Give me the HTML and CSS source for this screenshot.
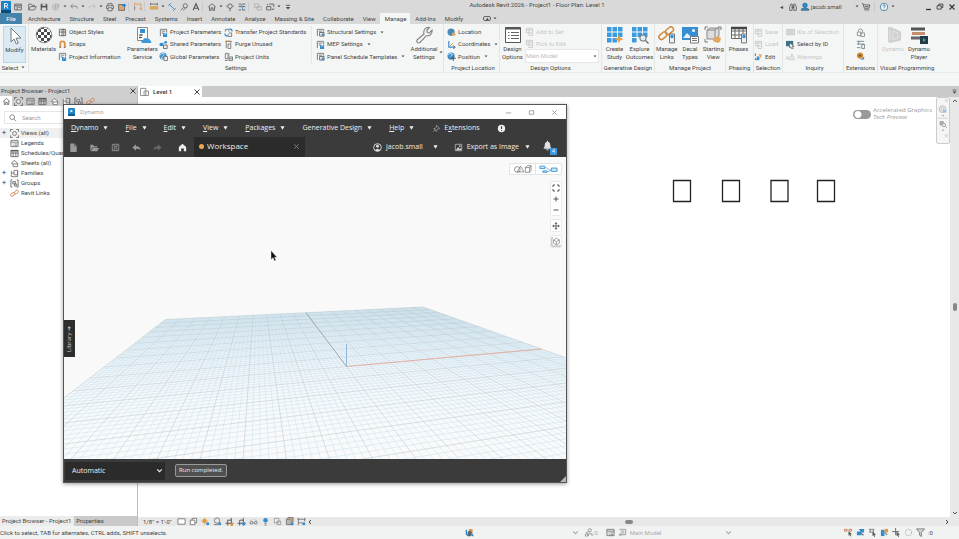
FILE: index.html
```html
<!DOCTYPE html>
<html lang="en">
<head>
<meta charset="utf-8">
<title>Autodesk Revit 2026 - Project1 - Floor Plan: Level 1</title>
<link rel="stylesheet" href="styles.css">
</head>
<body>
<svg class="sprite" aria-hidden="true">
  <symbol id="caret" viewBox="0 0 6 4"><path d="M1 .5h4L3 3z" fill="#444"/></symbol>
  <symbol id="caretw" viewBox="0 0 6 4"><path d="M.5 0h5L3 4z" fill="#f0f0f0"/></symbol>
  <symbol id="chev" viewBox="0 0 6 6"><path d="M1 2l2 2 2-2" fill="none" stroke="currentColor"/></symbol>
  <symbol id="close" viewBox="0 0 8 8"><path d="M1.500 1.500l5 5m0-5l-5 5" fill="none" stroke="currentColor"/></symbol>
  <symbol id="logo" viewBox="0 0 12 12"><rect x="1" width="10" height="12" rx="1" fill="#1b84cc"/><path d="M1 9h10v2a1 1 0 0 1-1 1H2a1 1 0 0 1-1-1z" fill="#0b4a7d"/><path d="M4.500 7.500V2.500h1.800a1.300 1.300 0 0 1 0 2.600h-1.800m2 0L7.800 7.500" fill="none" stroke="#fff"/></symbol>
  <symbol id="home" viewBox="0 0 12 12"><path d="M1.500 6L6 2l4.500 4M3 5.500V10h2V7h2v3h2V5.500" fill="none" stroke="#555"/></symbol>
  <symbol id="props" viewBox="0 0 12 12"><path d="M2 2.500h8v7H2zM2 4.500h8M5 4.500v5M6.500 6.500h2.500" fill="none" stroke="#555"/></symbol>
  <symbol id="open" viewBox="0 0 12 12"><path d="M2 9.500v-7h3l1 1.500h3v1.500M2 9.500l2-4h7l-2 4z" fill="none" stroke="#666"/></symbol>
  <symbol id="save" viewBox="0 0 12 12"><path d="M2 2h7l1 1v7H2z" fill="#555"/><path d="M4 2h4v2.500H4zM3.500 6.500h5V10h-5z" fill="#ddd"/></symbol>
  <symbol id="sync" viewBox="0 0 12 12"><circle cx="5.500" cy="6" r="3.500" fill="none" stroke="#aaa"/><path d="M3 6h5M5.500 3v6M8 2l2 2-2 2" fill="none" stroke="#aaa"/></symbol>
  <symbol id="undo" viewBox="0 0 12 12"><path d="M4.500 2.500L2 5l2.500 2.500M2.500 5H8q2 0 2 3" fill="none" stroke="#777"/></symbol>
  <symbol id="redo" viewBox="0 0 12 12"><path d="M7.500 2.500L10 5 7.500 7.500M9.500 5H4q-2 0-2 3" fill="none" stroke="#bbb"/></symbol>
  <symbol id="print" viewBox="0 0 12 12"><path d="M3.500 4.500V2h5v2.500M3.500 8H2V4.500h8V8H8.500M3.500 7h5v3.500h-5z" fill="#e8e8e8" stroke="#555"/></symbol>
  <symbol id="pdf" viewBox="0 0 12 12"><rect x="2" y="3" width="7" height="7" fill="#e2a366" stroke="#666"/><path d="M6 4h5M9 2v4" stroke="#1b87d6" stroke-width="1.500"/></symbol>
  <symbol id="meas" viewBox="0 0 12 12"><path d="M2 2.500h7.500V9M2 1v3M8 7.500L9.500 9.500 11 7.500" fill="none" stroke="#d9994a"/><path d="M2 5v5" stroke="#777"/></symbol>
  <symbol id="dim" viewBox="0 0 12 12"><path d="M2 2.500h8M2 1v3M10 1v3" stroke="#666"/><rect x="1" y="5" width="10" height="4" fill="#dda45b"/></symbol>
  <symbol id="line" viewBox="0 0 12 12"><path d="M3 3l6 6M1.500 4.500l3-3M7.500 10.500l3-3" stroke="#2b7fc0"/></symbol>
  <symbol id="tag" viewBox="0 0 12 12"><circle cx="7.500" cy="4.500" r="2.500" fill="none" stroke="#666"/><path d="M2 10l3.500-3.500M5 10l5-4" stroke="#666"/></symbol>
  <symbol id="texta" viewBox="0 0 12 12"><path d="M2.500 10L6 2l3.500 8M4 7.500h4" fill="none" stroke="#555" stroke-width="1.300"/></symbol>
  <symbol id="diam" viewBox="0 0 12 12"><circle cx="6" cy="5" r="2.700" fill="none" stroke="#555"/><path d="M6 7.500V11M1.500 5h1M9.500 5h1" stroke="#555"/></symbol>
  <symbol id="thin" viewBox="0 0 12 12"><path d="M2 2.500h3M2 5.500h3M2 9.500h3M6 2.500h4M6 5.500h4M6 9.500h4" stroke="#555"/><path d="M5 3l2 6" stroke="#1b87d6"/></symbol>
  <symbol id="winx" viewBox="0 0 12 12"><path d="M2 2.500h5v4H2zM5 5.500h5v4H5z" fill="#ddd" stroke="#aaa"/></symbol>
  <symbol id="wins" viewBox="0 0 12 12"><path d="M5 2.500h5.500v3.500M2 5.500h5v4H2zM3 4V2.500M8 9h2V7.500" fill="none" stroke="#555"/></symbol>
  <symbol id="more" viewBox="0 0 12 12"><path d="M3.500 4h5" stroke="#444"/><path d="M3.500 6h5L6 9z" fill="#444"/></symbol>
  <symbol id="bino" viewBox="0 0 12 12"><path d="M2 10V6l1.500-3.500H5V10zM7 10V2.500h1.500L10 6v4zM5 5h2v2H5z" fill="#e0e0e0" stroke="#555"/></symbol>
  <symbol id="user" viewBox="0 0 12 12"><rect x="3.500" y="1.500" width="5" height="5" rx="2" fill="#2394dc" stroke="#1b6296"/><path d="M1.500 10V8.500L4 7.500h4l2.500 1V10z" fill="#2394dc" stroke="#333" stroke-width=".6"/></symbol>
  <symbol id="cart" viewBox="0 0 12 12"><path d="M1 2h1.500L4 7.500h5.500l1-4H3M4 9.500h6" fill="none" stroke="#555"/><path d="M5 5.500h4" stroke="#555"/></symbol>
  <symbol id="help" viewBox="0 0 12 12"><circle cx="6" cy="6" r="4.500" fill="#f3f8fb" stroke="#41799d"/><path d="M4.700 5q0-1.500 1.400-1.500T7.400 5Q7.400 6 6 6.300V7M6 8v1" fill="none" stroke="#32729b"/></symbol>
  <symbol id="min" viewBox="0 0 12 12"><path d="M4 8.500h5" stroke="#333" stroke-width="1.300"/></symbol>
  <symbol id="rest" viewBox="0 0 12 12"><path d="M4.500 4.500v-2h5v4h-2M2.500 4.500h5v4h-5z" fill="none" stroke="#333"/></symbol>
  <symbol id="xx" viewBox="0 0 12 12"><path d="M3 3l6 6m0-6L3 9" stroke="#333" stroke-width="1.300"/></symbol>

  <symbol id="arrow" viewBox="0 0 18 18"><path d="M5 1l10 10-5 .3 2.300 4.700-2 1-2.300-5L5 15z" fill="#fff" stroke="#777"/></symbol>
  <symbol id="materials" viewBox="0 0 18 18"><defs><pattern id="chk" width="6" height="6" patternUnits="userSpaceOnUse"><path d="M0 0h3v3H0zM3 3h3v3H3z" fill="#4b4b4b"/></pattern></defs><circle cx="9" cy="9" r="7.800" fill="#fff"/><circle cx="9" cy="9" r="7.800" fill="url(#chk)" stroke="#666" stroke-width=".7"/></symbol>
  <symbol id="pservice" viewBox="0 0 18 18"><path d="M3.500 1.500h10v13h-10z" fill="#fff" stroke="#888"/><path d="M6 3h5v4H6z" fill="#2c8fd8"/><path d="M5 9h4M5 11.500h3M7 8v2M6 10.500v2" stroke="#555"/><path d="M8 17q-2-3 1-3 1-3 4-1.500 3-.5 3 2 2 .5 1 2.500z" fill="#3d97d8"/></symbol>
  <symbol id="wrench" viewBox="0 0 18 18"><path d="M2 14L9 8Q8 4 11 2q2-1 3.500-.5L11.800 4.500l.5 2 2 .4L17 4q.4 3-1.600 4.700-2 1.500-4 .9L5 16.500q-2 1-3-.5-.5-1 0-2z" fill="#f7f7f7" stroke="#888" stroke-width="1.200"/></symbol>
  <symbol id="dopt" viewBox="0 0 18 18"><path d="M1.500 1.500h15v15h-15z" fill="#fff" stroke="#555"/><path d="M1.500 2.500h15" stroke="#555" stroke-width="2"/><path d="M4 6.500h1.500M4 9.500h1.500M4 12.500h1.500M7 6.500h8M7 9.500h8M7 12.500h8" stroke="#666"/></symbol>
  <symbol id="study" viewBox="0 0 18 18"><path d="M1 1h4.500v4.500H1zM6.500 1H11v4.500H6.500zM12 1h4.500v4.500H12zM1 6.500h4.500V11H1zM6.500 6.500H11V11H6.500zM12 6.500h4.500V11H12zM1 12h4.500v4.500H1zM6.500 12H11v4.500H6.500z" fill="#389be0"/><path d="M13 8.500l1.200 3 3.300 1.500-3.300 1.500-1.200 3-1.200-3L8.500 13l3.300-1.500z" fill="#e6a254"/></symbol>
  <symbol id="explore" viewBox="0 0 18 18"><path d="M1 1h4.500v4.500H1zM6.500 1H11v4.500H6.500zM12 1h4.500v4.500H12zM1 6.500h4.500V11H1zM6.500 6.500H11V11H6.500zM12 6.500h4.500V11H12zM1 12h4.500v4.500H1z" fill="#389be0"/><circle cx="12" cy="12" r="3.200" fill="#dcedf8" stroke="#666"/><path d="M14.500 14.500l3 3" stroke="#666" stroke-width="1.300"/></symbol>
  <symbol id="links" viewBox="0 0 18 18"><g fill="none" stroke="#d08a3c" stroke-width="1.500"><rect x="0" y="7" width="9" height="5" rx="2.500" transform="rotate(-40 5 9)"/><rect x="7" y="2.500" width="9" height="5" rx="2.500" transform="rotate(-40 11 5)"/></g><path d="M11.500 8h5v9h-5z" fill="#eee" stroke="#777"/><path d="M12.500 9h3v3h-3z" fill="#2c8fd8"/></symbol>
  <symbol id="decal" viewBox="0 0 18 18"><path d="M1 1h16v13H1z" fill="#368fd3"/><circle cx="12.500" cy="4.500" r="1.500" fill="#fff"/><path d="M2 12l4-5 5 5z" fill="#e5f2fb"/><path d="M9.500 10.500h8v6.500h-8z" fill="#fff" stroke="#777"/><path d="M11 12.500h5M11 14.500h5" stroke="#777"/></symbol>
  <symbol id="startv" viewBox="0 0 18 18"><path d="M3 4h8v9H3zM3 4l3-2h9v8l-3 3M11 4l3-2" fill="#ddd" stroke="#888"/><path d="M1 4V1h3M14 1h3v3M1 13v3h3" fill="none" stroke="#777"/><path d="M9 12q4-3 8 0l-1 4q-3 2-7-1z" fill="#e5a75b"/></symbol>
  <symbol id="phases" viewBox="0 0 18 18"><path d="M1.500 1.500h15v11h-15zM1.500 5h15M1.500 9h15M5 2v10.500M9 2v10.500M13 2v8" fill="#fff" stroke="#666"/><path d="M1 2h16" stroke="#444" stroke-width="2.500"/><path d="M11.500 8h5v9h-5z" fill="#eee" stroke="#777"/><path d="M12.500 9h3v3h-3z" fill="#2c8fd8"/></symbol>
  <symbol id="dyn" viewBox="0 0 18 18"><path d="M4 1h3l9 4q1 .5 1 2v6q0 2-2 2l-9 2q-2 0-2-2z" fill="#cfcfcf"/><path d="M6 4v10M9 5v9l5-2V7z" stroke="#e6e6e6" fill="none"/></symbol>
  <symbol id="dynp" viewBox="0 0 18 18"><path d="M1 3h14" stroke="#555" stroke-width="3"/><path d="M2 7.500h13" stroke="#c78d6c" stroke-width="3"/><path d="M1 12h10" stroke="#666" stroke-width="3"/><path d="M10 10h8v8h-8z" fill="#1f3b4b"/><path d="M13 12l3 2-3 2z" fill="#5ca765"/></symbol>

  <symbol id="s-grid" viewBox="0 0 10 10"><path d="M1.500 1.500h5v7h-5zM1.500 4.500h7v-3h-4v7h4v-4" fill="#fff" stroke="#666"/></symbol>
  <symbol id="s-snap" viewBox="0 0 10 10"><path d="M2.500 9V4q0-2.500 2.500-2.500T7.500 4v5" fill="none" stroke="#d99345" stroke-width="2"/><path d="M1.500 8h2M6.500 8h2" stroke="#777"/></symbol>
  <symbol id="s-doc" viewBox="0 0 10 10"><path d="M1.500 9V1.500h7V5M3 3.500h4M3 5.500h2" fill="none" stroke="#777"/><path d="M4.500 5.500h4.500V10H4.500z" fill="#348ccd"/><path d="M6 6.500h2" stroke="#fff"/></symbol>
  <symbol id="s-share" viewBox="0 0 10 10"><circle cx="2.500" cy="5" r="2" fill="#348ccd"/><circle cx="7.500" cy="2.500" r="1.500" fill="#348ccd"/><path d="M2 5l5-2.500M2.500 5L6 8" stroke="#348ccd"/><path d="M5 5.500h4V9.500H5z" fill="#eee" stroke="#666"/></symbol>
  <symbol id="s-globe" viewBox="0 0 10 10"><circle cx="4.500" cy="4.500" r="4" fill="#3c8fc8"/><path d="M1 4q2-3 4-2.500T4 5t1 3" fill="none" stroke="#d9e8f1"/><path d="M5.500 5h4v4.500h-4z" fill="#eee" stroke="#777"/></symbol>
  <symbol id="s-loc" viewBox="0 0 10 10"><circle cx="4.500" cy="4.500" r="4" fill="#3c8fc8"/><path d="M1.500 3q2-2 4-1T4 5t1 3" fill="none" stroke="#777"/><circle cx="7.500" cy="7" r="2" fill="#e5a75b"/></symbol>
  <symbol id="s-pos" viewBox="0 0 10 10"><circle cx="4.500" cy="4.500" r="4" fill="#3c8fc8"/><path d="M1.500 3q2-2 4-1T4 5" fill="none" stroke="#d9e8f1"/><path d="M7 4v6M4 7h6" stroke="#555"/></symbol>
  <symbol id="s-coord" viewBox="0 0 10 10"><path d="M2 1v7h7" fill="none" stroke="#348ccd" stroke-width="1.300"/><path d="M2 8l5-5" stroke="#d98e44"/><path d="M7 6l2 2-2 2" fill="none" stroke="#555"/></symbol>
  <symbol id="s-trans" viewBox="0 0 10 10"><path d="M1.500 4V1.500h4V4M5.500 5.500h3v4h-4v-3" fill="#eee" stroke="#777"/><path d="M6 1q3 0 3 3M1 6q0 3 3 3" fill="none" stroke="#348ccd" stroke-width="1.300"/></symbol>
  <symbol id="s-purge" viewBox="0 0 10 10"><path d="M1.500 1.500h7M2.500 2v7M4.500 4.500h3v5h-3zM7.500 1v3" fill="none" stroke="#777"/><path d="M2 1.500h4" stroke="#c8824a" stroke-width="1.500"/></symbol>
  <symbol id="s-units" viewBox="0 0 10 10"><path d="M1.500 1.500h3v6h-3zM5.500 4V1.500M1 9.500h3M5.500 5.500h4v4h-4zM5.500 7.500h4" fill="none" stroke="#777"/></symbol>
  <symbol id="s-set" viewBox="0 0 10 10"><path d="M1.500 9V1.500h7V4M3 3.500h4" fill="none" stroke="#777"/><path d="M4 5h5v4H4z" fill="#eee" stroke="#666"/><circle cx="7.500" cy="7.500" r="1.300" fill="#348ccd"/></symbol>
  <symbol id="s-dis" viewBox="0 0 10 10"><path d="M1.500 1.500h7v5h-7zM1.500 3.500h7M4.500 1.500v8h4v-3" fill="none" stroke="#c9c9c9"/></symbol>
  <symbol id="s-set2" viewBox="0 0 10 10"><path d="M1.500 1.500h7v6h-5M3 3.500h4M3 5.500h4M1 7.500h3M2.500 6v3" fill="none" stroke="#999"/></symbol>
  <symbol id="s-warn" viewBox="0 0 10 10"><path d="M3.500 8.500L6.500 2l3 6.500zM6.500 4v3M.5 8.500v-3h2v3" fill="none" stroke="#c9c9c9"/></symbol>
  <symbol id="s-ids" viewBox="0 0 10 10"><path d="M.5 1.500h9v6h-9z" fill="#e0e0e0" stroke="#c4c4c4"/><path d="M2 3.500h6M2 5.500h6" stroke="#c4c4c4"/></symbol>
  <symbol id="s-edit" viewBox="0 0 10 10"><path d="M1.500 1.500v3M1.500 6.500v2h3" stroke="#666" fill="none"/><path d="M3 5h3v4H3z" fill="#348ccd"/><path d="M5 2l4 1-2 4z" fill="#e5a75b"/></symbol>
  <symbol id="s-sel" viewBox="0 0 10 10"><path d="M0 1h8v6H0z" fill="#3f7188"/><path d="M4 3l5 4H7l1 2.500-1.500.5-1-2.500L4 8.500z" fill="#fff" stroke="#444" stroke-width=".7"/></symbol>
  <symbol id="s-ext1" viewBox="0 0 10 10"><path d="M1.500 4.500h4v4h-4zM5.500 5.500h4v4h-4zM2.500 4q0-3 2.500-3t2.500 4" fill="none" stroke="#8c8c8c"/></symbol>
  <symbol id="s-ext2" viewBox="0 0 10 10"><path d="M1 1.500h8M1 4.500h8M3 1v4M6.500 5h3v4.500h-3zM1 8.500h4" fill="none" stroke="#6f8791"/></symbol>
  <symbol id="s-ext3" viewBox="0 0 10 10"><circle cx="4.500" cy="4" r="3.500" fill="#d98e2e"/><path d="M3 3h3v2H3z" fill="#555"/><path d="M5 9l4-4v3z" fill="#348ccd"/></symbol>

  <symbol id="t-view" viewBox="0 0 10 10"><path d="M.5 3V.5H3M7 .5h2.500V3M9.500 7v2.500H7M3 9.500H.5V7" fill="none" stroke="#666"/><circle cx="5" cy="5" r="2.200" fill="#eee" stroke="#777"/></symbol>
  <symbol id="t-leg" viewBox="0 0 10 10"><path d="M1 1.500h8v7H1zM1 3.500h8M3 5.500h1M5 5.500h3M3 7.500h1M5 7.500h3" fill="none" stroke="#777"/></symbol>
  <symbol id="t-sch" viewBox="0 0 10 10"><path d="M1 1.500h8v7H1zM1 4.500h8M3.500 3v5.500M6.500 3v5.500" fill="none" stroke="#666"/><path d="M1 2h8" stroke="#555" stroke-width="1.500"/></symbol>
  <symbol id="t-sheet" viewBox="0 0 10 10"><path d="M1.500 5l3-3.500 4 3v4h-5v-3zM3.500 5.500h5" fill="#fff" stroke="#777"/></symbol>
  <symbol id="t-fam" viewBox="0 0 10 10"><path d="M1.500 2v6.500H8.500v-7M4.500 1.500h4v5h-4zM1.500 4.500h3" fill="#fff" stroke="#777"/></symbol>
  <symbol id="t-grp" viewBox="0 0 10 10"><path d="M2.500 1H1v8h1.500M7.500 1H9v8H7.500" fill="none" stroke="#666"/><path d="M3 3l3-.5v3H3zM5 5.500h2.500V8H5z" fill="#ddd" stroke="#777"/></symbol>
  <symbol id="t-link" viewBox="0 0 10 10"><g fill="none" stroke="#d0875a"><rect x="0.500" y="4.500" width="5" height="3" rx="1.500" transform="rotate(-35 3 6)"/><rect x="4.500" y="2" width="5" height="3" rx="1.500" transform="rotate(-35 7 3.500)"/></g></symbol>

  <symbol id="v-rect" viewBox="0 0 10 10"><path d="M1 2h8v6H1z" fill="#fff" stroke="#777"/></symbol>
  <symbol id="v-cube" viewBox="0 0 10 10"><path d="M1.500 3.500h5v5h-5zM3.500 3.500v-2h5v5h-2" fill="#fff" stroke="#777"/></symbol>
  <symbol id="v-sheet" viewBox="0 0 10 10"><path d="M.5 1.500h6v8h-6zM4.500 4.500h5v5h-5z" fill="#fff" stroke="#888"/></symbol>
  <symbol id="v-sun" viewBox="0 0 10 10"><circle cx="4" cy="4.500" r="2.500" fill="#e29b45"/><path d="M4 .5v8M0 4.500h8" stroke="#e29b45" stroke-width=".7"/><circle cx="7.500" cy="7.500" r="1.700" fill="#348ccd"/></symbol>
  <symbol id="v-shadow" viewBox="0 0 10 10"><circle cx="4.500" cy="4" r="3" fill="#e9e9e9" stroke="#777"/><path d="M1 8.500h5" stroke="#777"/><circle cx="7.500" cy="7.500" r="1.700" fill="#348ccd"/></symbol>
  <symbol id="v-crop" viewBox="0 0 10 10"><path d="M.5 7h9M3 9.500V3.500h4V9.500M7 1v3" fill="none" stroke="#555"/><path d="M6 7h3v3H6z" fill="#e29b45"/></symbol>
  <symbol id="v-crop2" viewBox="0 0 10 10"><path d="M.5 7h9M3 9.500V3.500h4V9.500M7 1v3" fill="none" stroke="#555"/><circle cx="7.500" cy="7.500" r="1.900" fill="#348ccd"/></symbol>
  <symbol id="v-glass" viewBox="0 0 10 10"><path d="M1 7q0-2 2-2t1.500 2-3.500 0M5.500 7q0-2 2-2T9 7t-3.500 0M2 4l1-1M8 4L7 3" fill="none" stroke="#777"/></symbol>
  <symbol id="v-bulb" viewBox="0 0 10 10"><circle cx="5" cy="3.500" r="2.500" fill="#348ccd"/><path d="M4 7h2M4 9h2" stroke="#666"/></symbol>
  <symbol id="v-copy" viewBox="0 0 10 10"><path d="M1.500 1.500h5v5h-5zM4.500 4.500h4v4h-4z" fill="#eee" stroke="#999"/></symbol>
  <symbol id="v-gd" viewBox="0 0 10 10"><path d="M1.500 2.500h6v6h-6zM2 2l2-1.500h5v5" fill="#b5b5b5" stroke="#777"/><path d="M6 1l2 2-2 2z" fill="#e29b45"/><circle cx="8" cy="7.500" r="1.700" fill="#348ccd"/></symbol>
  <symbol id="v-dim" viewBox="0 0 10 10"><path d="M.5 2.500h9M1.500 1v8M8.500 1v4M2 6.500h4" stroke="#777"/><circle cx="7.500" cy="7.500" r="1.700" fill="#348ccd"/></symbol>
  <symbol id="v-funnel" viewBox="0 0 10 10"><path d="M.5 1h9L6 5v4.500L4 8V5z" fill="#d5d5d5" stroke="#777"/></symbol>
  <symbol id="v-lsel" viewBox="0 0 10 10"><path d="M.5 1.500h3v2h-3zM5.500 1.500h3v2h-3z" fill="none" stroke="#cb7954"/><path d="M5 3.500l4 3.500H7l1 2-1 .5-1-2L5 8.500z" fill="#555"/></symbol>
  <symbol id="v-usel" viewBox="0 0 10 10"><path d="M1 4h5v4H1zM3 1h6v4H6z" fill="#348ccd"/><path d="M5 4.500l4 3.500H7l1 2" fill="#555"/></symbol>
  <symbol id="v-psel" viewBox="0 0 10 10"><path d="M1 1.500h6M2.500 1.500v3M6 1.500v3M1 4.500h5" stroke="#777"/><path d="M5 4l4 3.500H7l1 2-1 .5-1-2L5 9z" fill="#555"/></symbol>
  <symbol id="v-fsel" viewBox="0 0 10 10"><path d="M1 2h4v7H1z" fill="#348ccd"/><path d="M5 1h4v4H5z" fill="#e29b45"/><path d="M4.500 3.500l4 4H7l1 2" fill="#555"/></symbol>
  <symbol id="v-drag" viewBox="0 0 10 10"><path d="M4 0v8M0 4h8" stroke="#666"/><path d="M5 4l4 3.500H7l1 2-1 .5-1-2L5 9z" fill="#555"/></symbol>
  <symbol id="v-ring" viewBox="0 0 10 10"><circle cx="5" cy="5" r="3.500" fill="none" stroke="#bbb" stroke-width="1.300" stroke-dasharray="1.500 1"/></symbol>
  <symbol id="v-work" viewBox="0 0 10 10"><path d="M1.500 2v5L4 9" fill="none" stroke="#348ccd" stroke-width="1.500"/><path d="M4 1h4.500v5H5z" fill="#e29b45"/><path d="M3 4l3-1 1.500 2v3L5 9.500 3 8z" fill="#58656e"/><path d="M8 6v2.500h1.500" stroke="#348ccd" fill="none" stroke-width="1.500"/></symbol>
  <symbol id="v-req" viewBox="0 0 10 10"><circle cx="6.500" cy="2.500" r="1.800" fill="#eee" stroke="#999"/><path d="M1.500 9V6.500H4V9zM5 9V6.500h4V9M3 6V4.500h3" fill="none" stroke="#999"/></symbol>

  <symbol id="d-new" viewBox="0 0 12 12"><path d="M2.500 1.500h4.500l2.500 3v6.500h-7z" fill="#9b9b9b"/><path d="M7 1.500v3h2.500" stroke="#555" fill="none" stroke-width=".7"/></symbol>
  <symbol id="d-open" viewBox="0 0 12 12"><path d="M1.500 10V3h3l1 1.500H9V6H3.500z" fill="#999"/><path d="M4 6.500h7L9 10H2z" fill="#999"/></symbol>
  <symbol id="d-save" viewBox="0 0 12 12"><path d="M2.500 2.500h7v7h-7zM4.500 2.500v2.500h3V2.500M4.500 9.500v-3h3v3" fill="none" stroke="#8f8f8f"/></symbol>
  <symbol id="d-undo" viewBox="0 0 12 12"><path d="M1.500 6L5.500 2.500v2Q10 4.500 10.500 9 9 7.300 5.500 7.500v2z" fill="#999"/></symbol>
  <symbol id="d-redo" viewBox="0 0 12 12"><path d="M10.500 6L6.500 2.500v2Q2 4.500 1.500 9 3 7.300 6.500 7.500v2z" fill="#666"/></symbol>
  <symbol id="d-home" viewBox="0 0 12 12"><path d="M2 5.500L6 2l4 3.500V10H7.500V7h-3v3H2z" fill="#ededed"/></symbol>
  <symbol id="d-user" viewBox="0 0 12 12"><circle cx="6" cy="6" r="4.200" fill="#3b3b3b" stroke="#ddd"/><circle cx="6" cy="4.700" r="1.600" fill="#ddd"/><path d="M3 9q3-3.500 6 0-3 2.500-6 0z" fill="#ddd"/></symbol>
  <symbol id="d-img" viewBox="0 0 12 12"><path d="M2.500 2.500h7v7h-7z" fill="none" stroke="#aaa"/><path d="M3 9l2.500-3.500 2 2L9 6v3z" fill="#ccc"/><circle cx="7.500" cy="4.500" r=".9" fill="#ccc"/></symbol>
  <symbol id="d-bell" viewBox="0 0 12 12"><path d="M1.500 9.500q1.500-1 1.500-4T6 2q3 .5 3 3.500t1.500 4z" fill="#e0e0e0"/><path d="M6 .8v2M4.800 10.700h2.400" stroke="#e0e0e0" stroke-width="1.200"/></symbol>
  <symbol id="d-pin" viewBox="0 0 12 12"><path d="M6 2.500l3.500 3.500-1 .5-1-.2-1.300 1.500v1.500L3 6h1.500l1.300-1.500zM4.500 7.500L2.500 9.500" fill="none" stroke="#aaa" stroke-width=".8"/></symbol>
  <symbol id="d-warn" viewBox="0 0 12 12"><circle cx="6" cy="6" r="4" fill="#efefef"/><path d="M6 3.500v3M6 7.500v1" stroke="#3b3b3b" stroke-width="1.200"/></symbol>
  <symbol id="d-geo" viewBox="0 0 20 10"><circle cx="4.500" cy="5.500" r="3" fill="none" stroke="#777" stroke-width=".8"/><path d="M4.500 8l3.500-6 3.500 6zM13 3.500h4.500V8.500H13zM13 3.500L15 1.500h4v5L17.500 8.500M17.500 3.500l1.500-2" fill="none" stroke="#777" stroke-width=".8"/></symbol>
  <symbol id="d-nodes" viewBox="0 0 20 10"><path d="M6 3.500q2.500 0 3.500 1.500t3.500 1M8.500 8L13 6.500" fill="none" stroke="#4a9bd3" stroke-width=".7"/><path d="M1 2h5v2.500H1zM4 7h4.500v1.500H4zM13 4h6v3.500h-6z" fill="#cfe6f6" stroke="#4a9bd3"/></symbol>
  <symbol id="d-fit" viewBox="0 0 10 10"><path d="M2 4V2h2M6 2h2v2M8 6v2H6M4 8H2V6" fill="none" stroke="#555"/></symbol>
  <symbol id="d-plus" viewBox="0 0 10 10"><path d="M5 2.500v5M2.500 5h5" stroke="#555"/></symbol>
  <symbol id="d-minus" viewBox="0 0 10 10"><path d="M2.500 5h5" stroke="#555"/></symbol>
  <symbol id="d-pan" viewBox="0 0 10 10"><path d="M5 2v6M2 5h6" stroke="#666"/><path d="M5 1l1.500 2h-3zM5 9l1.500-2h-3zM1 5l2-1.500v3zM9 5L7 3.500v3z" fill="#666"/></symbol>
  <symbol id="d-orbit" viewBox="0 0 12 12"><path d="M1 1v10h10M1 1h1.500M11 11V9.500" fill="none" stroke="#888" stroke-width=".8"/><path d="M6.500 1.500l3.500 2v4l-3.500 2-3.500-2v-4zM6.500 5.500v4M6.500 5.500L3 3.500M6.500 5.500l3.500-2" fill="none" stroke="#777" stroke-width=".8"/></symbol>
</svg>

<header>
  <div class="titlebar">
    <div class="quick">
      <button class="q" aria-label="Revit"><svg><use href="#logo"/></svg></button>
      <button class="q" aria-label="Home"><svg><use href="#props"/></svg></button><i class="gap"></i>
      <button class="q" aria-label="Open"><svg><use href="#open"/></svg></button>
      <button class="q" aria-label="Save"><svg><use href="#save"/></svg></button>
      <button class="q" aria-label="Synchronize"><svg><use href="#sync"/></svg></button>
      <svg class="c"><use href="#caret"/></svg>
      <button class="q" aria-label="Undo"><svg><use href="#undo"/></svg></button>
      <svg class="c"><use href="#caret"/></svg>
      <button class="q" aria-label="Redo"><svg><use href="#redo"/></svg></button>
      <svg class="c"><use href="#caret"/></svg>
      <button class="q" aria-label="Print"><svg><use href="#print"/></svg></button>
      <button class="q" aria-label="Export PDF"><svg><use href="#pdf"/></svg></button><i class="bar"></i>
      <button class="q" aria-label="Measure"><svg><use href="#meas"/></svg></button><i class="bar"></i>
      <button class="q" aria-label="Dimension"><svg><use href="#dim"/></svg></button>
      <svg class="c"><use href="#caret"/></svg>
      <button class="q" aria-label="Detail line"><svg><use href="#line"/></svg></button>
      <button class="q" aria-label="Tag"><svg><use href="#tag"/></svg></button>
      <button class="q" aria-label="Text"><svg><use href="#texta"/></svg></button><i class="bar"></i>
      <button class="q" aria-label="3D view"><svg><use href="#home"/></svg></button>
      <svg class="c"><use href="#caret"/></svg>
      <button class="q" aria-label="Section"><svg><use href="#diam"/></svg></button>
      <button class="q" aria-label="Thin lines"><svg><use href="#thin"/></svg></button><i class="bar"></i>
      <button class="q" aria-label="Close inactive"><svg><use href="#winx"/></svg></button>
      <button class="q" aria-label="Switch windows"><svg><use href="#wins"/></svg></button>
      <svg class="c"><use href="#caret"/></svg>
      <button class="q" aria-label="Customize"><svg><use href="#more"/></svg></button>
    </div>
    <h1>Autodesk Revit 2026 - Project1 - Floor Plan: Level 1</h1>
    <div class="account">
      <span class="back">◂</span>
      <button class="q" aria-label="Search"><svg><use href="#bino"/></svg></button>
      <button class="q" aria-label="Account"><svg><use href="#user"/></svg></button>
      <span class="name">jacob.small</span>
      <svg class="c"><use href="#caret"/></svg>
      <button class="q" aria-label="Store"><svg><use href="#cart"/></svg></button><i class="bar"></i>
      <button class="q" aria-label="Help"><svg><use href="#help"/></svg></button>
      <svg class="c"><use href="#caret"/></svg>
    </div>
    <div class="caption">
      <button class="q" aria-label="Minimize"><svg><use href="#min"/></svg></button>
      <button class="q" aria-label="Restore"><svg><use href="#rest"/></svg></button>
      <button class="q" aria-label="Close"><svg><use href="#xx"/></svg></button>
    </div>
  </div>
  <nav class="tabs">
    <a href="#" class="file">File</a><a href="#">Architecture</a><a href="#">Structure</a><a href="#">Steel</a><a href="#">Precast</a><a href="#">Systems</a><a href="#">Insert</a><a href="#">Annotate</a><a href="#">Analyze</a><a href="#">Massing &amp; Site</a><a href="#">Collaborate</a><a href="#">View</a><a href="#" class="on">Manage</a><a href="#">Add-Ins</a><a href="#">Modify</a>
    <button class="disp" aria-label="Ribbon display"><span>▴</span><svg class="c"><use href="#caret"/></svg></button>
  </nav>
</header>

<section class="ribbon">
  <div class="panel p-select"><div class="body"><button class="big sel"><svg><use href="#arrow"/></svg>Modify</button></div><h2>Select <svg class="c"><use href="#caret"/></svg></h2></div>
  <div class="panel p-settings"><div class="body">
    <button class="big"><svg><use href="#materials"/></svg>Materials</button>
    <div class="col"><button><svg><use href="#s-grid"/></svg>Object Styles</button><button><svg><use href="#s-snap"/></svg>Snaps</button><button><svg><use href="#s-doc"/></svg>Project Information</button></div>
    <button class="big"><svg><use href="#pservice"/></svg>Parameters Service</button>
    <div class="col"><button><svg><use href="#s-doc"/></svg>Project Parameters</button><button><svg><use href="#s-share"/></svg>Shared Parameters</button><button><svg><use href="#s-globe"/></svg>Global Parameters</button></div>
    <div class="col"><button><svg><use href="#s-trans"/></svg>Transfer Project Standards</button><button><svg><use href="#s-purge"/></svg>Purge Unused</button><button><svg><use href="#s-units"/></svg>Project Units</button></div>
    <div class="col ruled"><button><svg><use href="#s-set"/></svg>Structural Settings <svg class="c"><use href="#caret"/></svg></button><button><svg><use href="#s-doc"/></svg>MEP Settings <svg class="c"><use href="#caret"/></svg></button><button><svg><use href="#s-set"/></svg>Panel Schedule Templates <svg class="c"><use href="#caret"/></svg></button></div>
    <button class="big"><svg><use href="#wrench"/></svg>Additional Settings</button>
    <svg class="c low"><use href="#caret"/></svg>
  </div><h2>Settings</h2></div>
  <div class="panel p-loc"><div class="body"><div class="col"><button><svg><use href="#s-loc"/></svg>Location</button><button><svg><use href="#s-coord"/></svg>Coordinates <svg class="c"><use href="#caret"/></svg></button><button><svg><use href="#s-pos"/></svg>Position <svg class="c"><use href="#caret"/></svg></button></div></div><h2>Project Location</h2></div>
  <div class="panel p-opt"><div class="body"><button class="big"><svg><use href="#dopt"/></svg>Design Options</button>
    <div class="col"><button disabled><svg><use href="#s-dis"/></svg>Add to Set</button><button disabled><svg><use href="#s-dis"/></svg>Pick to Edit</button>
    <div class="pick"><select aria-label="Design option"><option>Main Model</option></select><svg class="c"><use href="#caret"/></svg></div></div></div><h2>Design Options</h2></div>
  <div class="panel p-gen"><div class="body"><button class="big"><svg><use href="#study"/></svg>Create Study</button><button class="big"><svg><use href="#explore"/></svg>Explore Outcomes</button></div><h2>Generative Design</h2></div>
  <div class="panel p-mng"><div class="body"><button class="big"><svg><use href="#links"/></svg>Manage Links</button><button class="big"><svg><use href="#decal"/></svg>Decal Types</button><button class="big"><svg><use href="#startv"/></svg>Starting View</button></div><h2>Manage Project</h2></div>
  <div class="panel p-pha"><div class="body"><button class="big"><svg><use href="#phases"/></svg>Phases</button></div><h2>Phasing</h2></div>
  <div class="panel p-sel"><div class="body"><div class="col"><button disabled><svg><use href="#s-dis"/></svg>Save</button><button disabled><svg><use href="#s-dis"/></svg>Load</button><button><svg><use href="#s-edit"/></svg>Edit</button></div></div><h2>Selection</h2></div>
  <div class="panel p-inq"><div class="body"><div class="col"><button disabled><svg><use href="#s-ids"/></svg>IDs of Selection</button><button><svg><use href="#s-sel"/></svg>Select by ID</button><button disabled><svg><use href="#s-warn"/></svg>Warnings</button></div></div><h2>Inquiry</h2></div>
  <div class="panel p-ext"><div class="body"><div class="col"><button aria-label="Extension 1"><svg><use href="#s-ext1"/></svg></button><button aria-label="Extension 2"><svg><use href="#s-ext2"/></svg></button><button aria-label="Extension 3"><svg><use href="#s-ext3"/></svg></button></div></div><h2>Extensions</h2></div>
  <div class="panel p-vis"><div class="body"><button class="big" disabled><svg><use href="#dyn"/></svg>Dynamo</button><button class="big"><svg><use href="#dynp"/></svg>Dynamo Player</button></div><h2>Visual Programming</h2></div>
</section>
<div class="optionbar"></div>

<main>
  <aside class="browser">
    <div class="bhead"><span>Project Browser - Project1</span><button aria-label="Close browser"><svg><use href="#close"/></svg></button></div>
    <div class="btools">
      <button class="on" aria-label="All"><svg><use href="#home"/></svg></button><button aria-label="Views"><svg><use href="#t-view"/></svg></button><button aria-label="Legends"><svg><use href="#t-leg"/></svg></button><button aria-label="Schedules"><svg><use href="#t-sch"/></svg></button><button aria-label="Sheets"><svg><use href="#t-sheet"/></svg></button><button aria-label="Families"><svg><use href="#t-fam"/></svg></button><button aria-label="Groups"><svg><use href="#t-grp"/></svg></button><button aria-label="Links"><svg><use href="#t-link"/></svg></button>
    </div>
    <label class="search"><svg viewBox="0 0 10 10"><circle cx="4" cy="4" r="3" fill="none" stroke="#777"/><path d="M6.500 6.500L9 9" stroke="#777"/></svg><input type="search" placeholder="Search" aria-label="Search"></label>
    <ul class="tree">
      <li class="on"><b>+</b><svg><use href="#t-view"/></svg>Views (all)</li>
      <li><b></b><svg><use href="#t-leg"/></svg>Legends</li>
      <li><b></b><svg><use href="#t-sch"/></svg>Schedules/Quantities</li>
      <li><b></b><svg><use href="#t-sheet"/></svg>Sheets (all)</li>
      <li><b>+</b><svg><use href="#t-fam"/></svg>Families</li>
      <li><b>+</b><svg><use href="#t-grp"/></svg>Groups</li>
      <li><b></b><svg><use href="#t-link"/></svg>Revit Links</li>
    </ul>
    <div class="btabs"><button class="on">Project Browser - Project1</button><button>Properties</button></div>
  </aside>
  <section class="doc">
    <div class="dtabs"><div class="dtab"><svg><use href="#v-sheet"/></svg><span>Level 1</span><button aria-label="Close Level 1"><svg><use href="#close"/></svg></button></div><svg class="menu"><use href="#more"/></svg></div>
    <div class="plan">
      <div class="sheet">
        <svg class="columns" viewBox="0 0 164 24"><path d="M1.500 1.500h17v21h-17zM50.500 1.500h17v21h-17zM99 1.500h17v21h-17zM145.500 1.500h17v21h-17z" fill="#fff" stroke="#222" stroke-width="1.300"/></svg>
        <label class="accel"><input type="checkbox"><span>Accelerated Graphics<br><em>Tech Preview</em></span></label>
        <div class="navbar"><svg viewBox="0 0 14 47"><circle cx="11" cy="3" r="1.200" fill="none" stroke="#aaa" stroke-width=".6"/><circle cx="6.500" cy="13" r="4" fill="#e4e4e4" stroke="#bbb"/><circle cx="6.500" cy="13" r="1.500" fill="#fff" stroke="#bbb"/><path d="M7 14h4v3H7z" fill="#9fc0dc"/><path d="M5.500 20h3L7 21.500zM5.500 37h3L7 38.500z" fill="#888"/><path d="M1 23.500h12" stroke="#ccc"/><path d="M3 27h5v5H3z" fill="#aaa"/><circle cx="8" cy="31.500" r="2" fill="#eee" stroke="#999"/><path d="M9.500 33l2 2" stroke="#999"/><circle cx="11" cy="44" r="1.200" fill="none" stroke="#aaa" stroke-width=".6"/></svg></div>
      </div>
      <div class="vscroll"><svg class="up"><use href="#chev"/></svg><i></i><svg><use href="#chev"/></svg></div>
    </div>
    <div class="viewbar"><span class="scale">1/8" = 1'-0"</span>
      <button aria-label="Detail level"><svg><use href="#v-rect"/></svg></button><button aria-label="Visual style"><svg><use href="#v-cube"/></svg></button><button aria-label="Sun path"><svg><use href="#v-sun"/></svg></button><button aria-label="Shadows"><svg><use href="#v-shadow"/></svg></button><button aria-label="Crop"><svg><use href="#v-crop"/></svg></button><button aria-label="Show crop"><svg><use href="#v-crop2"/></svg></button><button aria-label="Hide"><svg><use href="#v-glass"/></svg></button><button aria-label="Reveal"><svg><use href="#v-bulb"/></svg></button><button aria-label="Temporary view"><svg><use href="#v-copy"/></svg></button><button aria-label="Analytical model"><svg><use href="#v-gd"/></svg></button><button aria-label="Constraints"><svg><use href="#v-dim"/></svg></button>
      <svg class="left"><use href="#chev"/></svg>
      <div class="hscroll"><i></i></div><svg class="right"><use href="#chev"/></svg><span class="corner"></span>
    </div>
  </section>
</main>

<footer>
  <span class="hint">Click to select, TAB for alternates, CTRL adds, SHIFT unselects.</span>
  <svg><use href="#v-work"/></svg>
  <div class="sets"><svg class="dim"><use href="#chev"/></svg><svg><use href="#v-req"/></svg><span>:0</span><svg class="ml"><use href="#t-leg"/></svg><svg><use href="#s-set2"/></svg><span class="mm">Main Model</span><svg class="dim"><use href="#chev"/></svg></div>
  <div class="selects"><svg><use href="#v-lsel"/></svg><svg><use href="#v-usel"/></svg><svg><use href="#v-psel"/></svg><svg><use href="#v-fsel"/></svg><svg><use href="#v-drag"/></svg><svg><use href="#v-ring"/></svg><svg><use href="#v-funnel"/></svg><span>:0</span></div>
</footer>

<section class="dynamo" aria-label="Dynamo">
  <div class="dtitle"><svg class="ico" viewBox="0 0 8 8"><rect x="1" width="7" height="8" rx="1" fill="#1d84c6"/><path d="M1 6h7v2H1z" fill="#175a8b"/><path d="M3.500 1.500L6 3 3.500 4.500z" fill="#fff"/></svg><span>Dynamo</span>
    <button aria-label="Minimize"><svg viewBox="0 0 8 8"><path d="M1 4.500h6" stroke="#999"/></svg></button><button aria-label="Maximize"><svg viewBox="0 0 8 8"><path d="M1.500 2h5v4h-5z" fill="none" stroke="#999"/></svg></button><button aria-label="Close"><svg><use href="#close"/></svg></button></div>
  <nav class="dmenu">
    <button><span><u>D</u>ynamo</span><svg><use href="#caretw"/></svg></button><button><span><u>F</u>ile</span><svg><use href="#caretw"/></svg></button><button><span><u>E</u>dit</span><svg><use href="#caretw"/></svg></button><button><span><u>V</u>iew</span><svg><use href="#caretw"/></svg></button><button><span><u>P</u>ackages</span><svg><use href="#caretw"/></svg></button><button><span>Generative Design</span><svg><use href="#caretw"/></svg></button><button><span><u>H</u>elp</span><svg><use href="#caretw"/></svg></button>
    <button class="ext"><svg class="pin"><use href="#d-pin"/></svg><span>E<u>x</u>tensions</span></button><button class="alert" aria-label="Alerts"><svg class="pin"><use href="#d-warn"/></svg></button>
  </nav>
  <div class="dtools">
    <div class="acts"><button aria-label="New"><svg><use href="#d-new"/></svg></button><button aria-label="Open"><svg><use href="#d-open"/></svg></button><button aria-label="Save"><svg><use href="#d-save"/></svg></button><button aria-label="Undo"><svg><use href="#d-undo"/></svg></button><button aria-label="Redo"><svg><use href="#d-redo"/></svg></button></div>
    <button class="hm" aria-label="Home"><svg><use href="#d-home"/></svg></button>
    <div class="wtab"><i></i><span>Workspace</span><button aria-label="Close workspace"><svg><use href="#close"/></svg></button></div>
    <button class="usr"><svg><use href="#d-user"/></svg><span>jacob.small</span><svg class="cw"><use href="#caretw"/></svg></button>
    <button class="exp"><svg><use href="#d-img"/></svg><span>Export as Image</span><svg class="cw"><use href="#caretw"/></svg></button>
    <button class="bell" aria-label="Notifications"><svg><use href="#d-bell"/></svg><b>4</b></button>
  </div>
  <div class="dview">
    <svg id="space" viewBox="64 157 502 302" preserveAspectRatio="xMidYMid slice"><defs><linearGradient id="haze" gradientUnits="userSpaceOnUse" x1="0" y1="305" x2="0" y2="459"><stop offset="0" stop-color="#d8e9f3"/><stop offset=".25" stop-color="#ecf4f9"/><stop offset=".6" stop-color="#f6f9fb"/><stop offset="1" stop-color="#f9fafb"/></linearGradient></defs></svg>
    <div class="modes"><button aria-label="Geometry view"><svg><use href="#d-geo"/></svg></button><button aria-label="Graph view"><svg><use href="#d-nodes"/></svg></button></div>
    <div class="zooms">
      <div><button aria-label="Fit"><svg><use href="#d-fit"/></svg></button><button aria-label="Zoom in"><svg><use href="#d-plus"/></svg></button><button aria-label="Zoom out"><svg><use href="#d-minus"/></svg></button></div>
      <div><button aria-label="Pan"><svg><use href="#d-pan"/></svg></button></div>
      <div><button aria-label="Orbit"><svg><use href="#d-orbit"/></svg></button></div>
    </div>
    <button class="library">Library <span>➔</span></button>
    <svg class="pointer" viewBox="0 0 8 12"><path d="M1 .5v9l2-1.800L4.500 11l1.500-.7-1.500-3h2.500z" fill="#111" stroke="#fff" stroke-width=".4"/></svg>
  </div>
  <div class="drun"><div class="mode"><select aria-label="Run mode"><option>Automatic</option></select><svg><use href="#chev"/></svg></div><output>Run completed.</output><svg class="grip" viewBox="0 0 6 6"><path d="M6 0v6H0z" fill="#b5b5b5"/></svg></div>
</section>
<script src="grid.js"></script>
</body>
</html>
```
FILE: styles.css
```css
* { box-sizing: border-box; }
body { margin: 0; height: 100vh; display: flex; flex-direction: column; overflow: hidden; background: #fff; color: #444; font: 6px/8px Roboto, "Noto Sans", sans-serif; }
button, input, select { font: inherit; color: inherit; background: none; border: 0; padding: 0; margin: 0; }
h1, h2, ul { margin: 0; padding: 0; font: inherit; list-style: none; }
a { color: inherit; text-decoration: none; }
svg { display: block; flex: none; }
.sprite { position: absolute; width: 0; height: 0; }
.c { width: 6px; height: 3px; }

/* Title bar and tabs */
header { background: #d9d9d9; }
.titlebar { display: flex; height: 13px; align-items: center; }
.quick, .account, .caption { display: flex; align-items: center; }
.q, .q svg { width: 12px; height: 12px; }
.q svg { padding: 1px; }
.q:first-child svg { padding: 0; }
.gap { width: 2px; }
.bar { width: 4px; height: 10px; border-left: 1px solid #cacaca; }
.titlebar h1 { flex: 1; text-align: center; line-height: 10px; align-self: flex-start; }
.back { width: 7px; }
.name { width: 43px; }
.account .bar { margin-left: 2px; }
.caption { margin-left: 26px; margin-right: 1px; }
.tabs { display: flex; height: 11px; line-height: 11px; }
.tabs a { padding: 0 4px 0 5px; }
.tabs .file { width: 22px; margin-right: 1px; padding: 0; text-align: center; background: #4483aa; color: #fff; }
.tabs .on { background: #f4f6f6; }
.disp { display: flex; align-items: center; gap: 1px; margin-left: 16px; }
.disp span { width: 8px; height: 5px; border: 1px solid #666; border-radius: 2px; font-size: 5px; line-height: 3px; }

/* Ribbon */
.ribbon { display: flex; background: #f4f6f6; height: 49px; border-bottom: 1px solid #e9ebeb; }
.panel { border-right: 1px solid #e4e6e6; padding-top: 2px; display: flex; flex-direction: column; }
.body { display: flex; height: 37px; }
.panel h2 { height: 9px; line-height: 10px; display: flex; align-items: center; justify-content: center; gap: 2px; white-space: nowrap; }
.big { width: 25px; display: flex; flex-direction: column; align-items: center; line-height: 8px; }
.big svg { width: 18px; height: 18px; margin-bottom: 1px; }
.big.sel { width: 23px; margin-left: 3px; background: #dcebf3; border: 1px solid #b9d7e6; }
.col { display: flex; flex-direction: column; }
.col > * { flex: 1; display: flex; align-items: center; gap: 2px; white-space: nowrap; }
.col button svg:first-child { width: 9px; height: 9px; }
.col .c, .low { margin-left: 1px; }
.low { align-self: flex-end; margin-bottom: 9px; }
button:disabled { color: #c6c6c6; }
.ruled { border-left: 1px solid #e4e6e6; padding-left: 4px; }
.p-select { width: 29px; }
.p-settings { width: 415px; }
.p-settings .body { display: grid; grid-template-columns: 29px 68px 33px 65px 87px 100px 26px 7px; }
.p-settings .big { width: auto; }
.p-loc { width: 56px; padding-left: 3px; }
.p-opt { width: 102px; }
.p-opt .col { flex: 1; }
.p-gen { width: 53px; }
.p-mng { width: 71px; }
.p-mng .body { justify-content: space-evenly; }
.p-mng .big { width: 23px; }
.p-pha { width: 28px; }
.p-sel { width: 29px; }
.p-inq { width: 61px; padding-left: 3px; }
.p-ext { width: 34px; }
.p-ext .body { justify-content: center; }
.p-vis { flex: 1; border: 0; padding-left: 2px; }
.p-vis .big { width: 26px; }
.p-vis h2 { justify-content: flex-start; }
.pick { background: #fff; border: 1px solid #e6e6e6; color: #bbb; margin-right: 2px; }
.pick select, .mode select { appearance: none; flex: 1; }
.optionbar { height: 13px; background: #f4f6f6; }

/* Work area */
main { flex: 1; display: flex; min-height: 0; }
.browser { width: 138px; display: flex; flex-direction: column; border-right: 1px solid #bdbdbd; }
.bhead { height: 10px; background: #cfcfcf; display: flex; justify-content: space-between; align-items: center; padding: 0 0 0 1px; }
.bhead svg, .dtab button svg { width: 8px; height: 8px; }
.btools { display: flex; height: 10px; background: #cfcfcf; }
.btools button { width: 12px; display: flex; align-items: center; justify-content: center; }
.btools .on { background: #fff; }
.btools svg { width: 9px; height: 9px; }
.search { display: flex; align-items: center; gap: 5px; margin: 5px 4px 4px; height: 13px; border: 1px solid #e6e6e6; padding-left: 4px; }
.search svg { width: 8px; height: 8px; }
.search input { width: 80px; }
.search input::placeholder { color: #999; }
.tree { flex: 1; }
.tree li { height: 10px; display: flex; align-items: center; gap: 2px; }
.tree .on { background: #f0f0f0; }
.tree b { width: 8px; text-align: center; font: 8px/8px Roboto, sans-serif; }
.tree svg { width: 9px; height: 9px; }
.btabs { display: flex; height: 10px; background: #cacaca; }
.btabs button { padding: 0 3px 0 2px; }
.btabs .on { background: #ececec; }
.doc { flex: 1; display: flex; flex-direction: column; min-width: 0; }
.dtabs { display: flex; justify-content: space-between; align-items: center; height: 11px; background: #cacaca; }
.dtab { display: flex; align-items: center; width: 64px; height: 11px; background: #fff; font-weight: 600; padding: 0 1px 0 2px; gap: 4px; }
.dtab > svg { width: 9px; height: 9px; }
.dtab span { flex: 1; }
.menu { width: 9px; height: 9px; }
.plan { flex: 1; display: flex; min-height: 0; }
.sheet { flex: 1; position: relative; }
.columns { position: absolute; left: 534px; top: 82px; width: 164px; height: 24px; }
.accel { position: absolute; right: 18px; top: 10px; display: flex; align-items: center; gap: 2px; color: #999; font-family: "Open Sans", sans-serif; line-height: 7px; }
.accel input { appearance: none; width: 18px; height: 9px; border-radius: 5px; background: radial-gradient(circle at 5px 50%, #fff 3px, #999 4px); }
.navbar { position: absolute; right: 0; top: 0; width: 14px; height: 47px; border: 1px solid #ccc; border-radius: 2px; background: #f5f5f5; }
.vscroll { width: 9px; background: #e8e8e8; display: flex; flex-direction: column; align-items: center; justify-content: space-between; padding: 1px 0; color: #555; }
.vscroll svg, .left, .right { width: 6px; height: 6px; }
.vscroll i { width: 4px; height: 8px; border-radius: 2px; background: #888; }
.up { transform: rotate(180deg); }
.viewbar { display: flex; align-items: center; height: 9px; background: #e8e8e8; padding-left: 5px; }
.scale { width: 32px; }
.viewbar button { width: 12px; display: flex; justify-content: center; }
.viewbar button svg { width: 9px; height: 9px; }
.left { transform: rotate(90deg); }
.right { transform: rotate(-90deg); }
.hscroll { flex: 1; display: flex; justify-content: center; }
.hscroll i { width: 8px; height: 4px; border-radius: 2px; background: #888; }
.corner { width: 9px; }

/* Status bar */
footer { height: 13px; display: grid; grid-template-columns: 465px 107px 1fr 87px 25px; align-items: center; background: #f1f3f3; }
footer svg { width: 9px; height: 9px; }
.sets { display: flex; align-items: center; grid-column: 3; color: #aaa; }
.sets .dim { width: 7px; height: 7px; margin-right: 5px; }
.sets .ml { margin: 0 3px 0 8px; }
.sets .mm { width: 98px; padding-left: 3px; }
.selects { display: flex; gap: 3px; align-items: center; margin-left: -3px; }

/* Dynamo window */
.dynamo { position: absolute; left: 63px; top: 104px; width: 504px; height: 379px; display: flex; flex-direction: column; background: #3b3b3b; border: 1px solid #555; box-shadow: 0 1px 4px rgba(0,0,0,.4); color: #eee; font-family: "Open Sans", sans-serif; font-size: 7px; }
.dtitle { display: flex; align-items: center; height: 14px; background: #fff; color: #999; font-size: 6px; }
.dtitle .ico { width: 8px; height: 8px; margin: 0 5px 0 3px; }
.dtitle span { flex: 1; }
.dtitle button { width: 23px; display: flex; justify-content: center; }
.dtitle button svg { width: 7px; height: 7px; }
.dmenu { display: flex; align-items: center; height: 18px; padding-left: 7px; gap: 17px; }
.dmenu button { display: flex; align-items: center; gap: 5px; white-space: nowrap; }
.dmenu svg { width: 5px; height: 4px; }
.dmenu .pin { width: 11px; height: 11px; }
.dmenu .ext { gap: 2px; }
.dmenu .alert { margin-left: -1px; }
.dtools { display: flex; height: 20px; align-items: center; }
.dtools svg { width: 11px; height: 11px; }
.dtools .cw { width: 5px; height: 4px; }
.acts { display: flex; gap: 10px; padding-left: 4px; }
.hm { margin: 0 6px 0 14px; }
.wtab { width: 111px; align-self: stretch; background: #2b2b2b; display: flex; align-items: center; padding: 0 5px 2px; gap: 3px; font-size: 8px; }
.wtab i { width: 5px; height: 5px; border-radius: 50%; background: #eda84e; }
.wtab span { flex: 1; }
.wtab svg { width: 7px; height: 7px; color: #888; }
.usr, .exp { display: flex; align-items: center; gap: 3px; white-space: nowrap; }
.usr { margin-left: auto; }
.usr .cw { margin-left: 7px; }
.exp { margin-left: 15px; }
.exp .cw { margin-left: 3px; }
.bell { position: relative; margin: 0 13px 4px 12px; }
.bell b { position: absolute; right: -4px; bottom: -4px; width: 7px; height: 7px; background: #3c96dc; color: #fff; font: 5px/7px "Open Sans", sans-serif; }
.dview { flex: 1; position: relative; min-height: 0; background: #f9f9f9; color: #666; }
#space { width: 100%; height: 100%; }
.modes { position: absolute; right: 4px; top: 6px; display: flex; background: #fff; border: 1px solid #e4e4e4; border-radius: 1px; }
.modes button { padding: 0 3px; border-right: 1px solid #e4e4e4; }
.modes button:last-child { border: 0; }
.modes svg { width: 19px; height: 10px; }
.zooms { position: absolute; right: 4px; top: 24px; display: flex; flex-direction: column; gap: 3px; }
.zooms div { background: #fff; border: 1px solid #e9e9e9; border-radius: 1px; width: 12px; }
.zooms button { display: flex; width: 10px; height: 11px; align-items: center; }
.zooms svg { width: 10px; height: 10px; }
.library { position: absolute; left: 0; top: 163px; height: 37px; width: 11px; background: #2e2e2e; color: #ccc; writing-mode: vertical-rl; transform: rotate(180deg); font-size: 6px; line-height: 11px; white-space: nowrap; }
.pointer { position: absolute; left: 206px; top: 93px; width: 8px; height: 12px; }
.drun { position: relative; display: flex; align-items: center; height: 23px; gap: 10px; padding-left: 1px; }
.mode { width: 100px; height: 18px; background: #2b2b2b; display: flex; align-items: center; padding: 0 2px 0 7px; }
.mode svg { width: 7px; height: 7px; }
.drun output { border: 1px solid #999; border-radius: 2px; background: #505050; height: 13px; line-height: 11px; padding: 0 3px; font-size: 6px; }
.grip { position: absolute; right: 0; bottom: 0; width: 6px; height: 6px; }
```
FILE: grid.js
```js
// Draws the ground plane of the 3D background: 20 x 20 cells, each split in five.
(function () {
  const svg = document.getElementById('space');
  const NS = 'http://www.w3.org/2000/svg';
  const G = 1.16746, H = 1.83627;
  const w = (X, Y) => 1 + (G - 1) * X + (H - 1) * Y;
  const P = (X, Y) => {
    const k = w(X, Y);
    return ((346.5 + X * (541.5 * G - 346.5) + Y * (306 * H - 346.5)) / k).toFixed(2) + ' ' +
           ((366.5 + X * (349 * G - 366.5) + Y * (312.7 * H - 366.5)) / k).toFixed(2);
  };
  const near = 0.12;
  const add = (d, stroke, width, fill) => {
    const p = document.createElementNS(NS, 'path');
    p.setAttribute('d', d);
    p.setAttribute('fill', fill || 'none');
    if (stroke) { p.setAttribute('stroke', stroke); p.setAttribute('stroke-width', width); }
    svg.appendChild(p);
  };
  const yMin = X => Math.max(-1, (near - 1 - (G - 1) * X) / (H - 1));
  const xMin = Y => Math.max(-1, (near - 1 - (H - 1) * Y) / (G - 1));
  add('M' + P(-1, 1) + 'L' + P(1, 1) + 'L' + P(1, yMin(1)) + 'L' + P(-1, yMin(-1)) + 'Z', null, 0, 'url(#haze)');
  let minor = '', major = '';
  for (let i = -50; i <= 50; i++) {
    const t = i / 50;
    const d = 'M' + P(t, 1) + 'L' + P(t, yMin(t)) + 'M' + P(xMin(t), t) + 'L' + P(1, t);
    if (i % 5) minor += d; else major += d;
  }
  add(minor, '#cbe1ed', 0.5);
  add(major, '#b9c4ca', 0.5);
  add('M' + P(0, 0) + 'L' + P(0, 1), '#999', 0.8);
  add('M' + P(0, 0) + 'L' + P(1, 0), '#e3a99b', 0.9);
  add('M346.500 366.500V344', '#8fb8dc', 1);
})();
```
